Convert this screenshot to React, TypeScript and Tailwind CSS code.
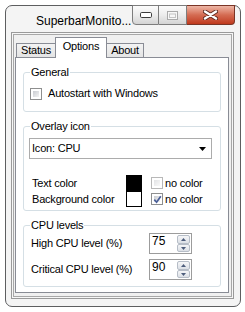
import React from "react";

function CheckBox({ checked = false, dim = false }: { checked?: boolean; dim?: boolean }) {
  return (
    <div
      className={
        dim
          ? "relative w-[12px] h-[12px] shrink-0 border border-[#b8b8b8] bg-white p-[2px]"
          : "relative w-[12px] h-[12px] shrink-0 border border-[#8e8f8f] bg-white p-[2px]"
      }
    >
      <div
        className={
          dim
            ? "w-full h-full bg-linear-to-br from-[#e2e3e5] to-[#f9f9f9]"
            : "w-full h-full bg-linear-to-br from-[#c9ccd1] to-[#f3f3f3]"
        }
      />
      {checked && (
        <svg className="absolute left-[1px] top-[1px]" width="9" height="9" viewBox="0 0 9 9">
          <path d="M1.3 4.6 L3.6 7.2 L7.8 1.2" fill="none" stroke="#4a5f98" strokeWidth="1.7" />
        </svg>
      )}
    </div>
  );
}

function SpinBox({ value }: { value: string }) {
  return (
    <div className="flex w-[43px] h-[21px] border border-[#9c9c9c] bg-white">
      <div className="flex-1 pl-[2px] text-[12px] leading-[14px] tracking-[0px]">{value}</div>
      <div className="flex flex-col w-[14px] py-px pr-px">
        <div className="h-[9px] border border-[#b6bdc7] rounded-[2px] bg-linear-to-b from-[#f5f6f8] to-[#dce0e6] flex items-center justify-center">
          <svg width="5" height="3" viewBox="0 0 5 3">
            <path d="M0 3 L2.5 0 L5 3 Z" fill="#4d5d7c" />
          </svg>
        </div>
        <div className="h-[8px] border border-[#b6bdc7] rounded-[2px] bg-linear-to-b from-[#f5f6f8] to-[#dce0e6] flex items-center justify-center">
          <svg width="5" height="3" viewBox="0 0 5 3">
            <path d="M0 0 L2.5 3 L5 0 Z" fill="#4d5d7c" />
          </svg>
        </div>
      </div>
    </div>
  );
}

export default function App() {
  return (
    <div className="w-[245px] h-[312px] bg-white pt-[5px] pl-[5px] font-['Liberation_Sans',Arial,sans-serif] text-black">
      <div className="w-[236px] h-[302px] border border-[#5d5e60] rounded-[7px] bg-[#f4f4f4] flex flex-col">
        {/* Title bar */}
        <div className="flex h-[26px] shrink-0">
          <div className="pl-[30px] pt-[8px] text-[12px] leading-[15px]">SuperbarMonito...</div>
          <div className="ml-auto mr-[5px] -mt-px flex h-[20px]">
            <div className="w-[27px] h-full border border-[#7d7d7d] rounded-bl-[4px] bg-linear-to-b from-[#fcfcfc] via-[#ececec] to-[#d4d4d4] flex items-center justify-center">
              <svg width="12" height="6" viewBox="0 0 12 6">
                <rect x="0.5" y="0.5" width="11" height="5" rx="1.2" fill="#ffffff" stroke="#3c3c3c" />
              </svg>
            </div>
            <div className="w-[28px] h-full border-y border-r border-[#7d7d7d] bg-linear-to-b from-[#fcfcfc] via-[#ececec] to-[#d4d4d4] flex items-center justify-center">
              <svg width="11" height="9" viewBox="0 0 11 9">
                <rect x="0.5" y="0.5" width="10" height="8" fill="#f7f7f7" stroke="#a9a9a9" />
                <rect x="2.5" y="3" width="6" height="3.5" fill="none" stroke="#c4c4c4" />
              </svg>
            </div>
            <div className="w-[48px] h-full border-y border-r border-[#7a3526] rounded-br-[4px] bg-linear-to-b from-[#edb6a6] via-[#d46b52] to-[#c0391c] flex items-center justify-center">
              <svg width="15" height="10" viewBox="0 0 15 10">
                <path d="M2 1.5 L13 8.5 M13 1.5 L2 8.5" stroke="#5e2a20" strokeWidth="4.2" strokeLinecap="round" />
                <path d="M2 1.5 L13 8.5 M13 1.5 L2 8.5" stroke="#ffffff" strokeWidth="2.4" strokeLinecap="round" />
              </svg>
            </div>
          </div>
        </div>

        {/* Client area */}
        <div className="ml-[5px] w-[223px] flex-1 mb-[7px] border border-[#9a9a9a] p-px bg-[#f7f7f7]">
          <div className="h-full border border-[#a8a8a8] bg-[#f0f0f0] pt-[2px]">
            <div className="ml-px w-[214px] flex flex-col">
              {/* Tabs */}
              <div className="flex items-end h-[20px] pl-px text-[11px] tracking-[-0.2px]">
                <div className="w-[40px] h-[14px] border-l border-t border-r border-[#898c95] bg-linear-to-b from-[#f3f3f3] to-[#e4e4e4] flex items-center justify-center leading-[13px]">
                  Status
                </div>
                <div className="relative z-10 -ml-px w-[52px] h-[21px] -mb-px border-l border-t border-r border-[#898c95] bg-white flex items-start justify-center pt-[2px] leading-[13px]">
                  Options
                </div>
                <div className="-ml-px w-[38px] h-[14px] border-l border-t border-r border-[#898c95] bg-linear-to-b from-[#f3f3f3] to-[#e4e4e4] flex items-center justify-center leading-[13px]">
                  About
                </div>
              </div>

              {/* Panel */}
              <div className="h-[236px] border border-[#898c95] bg-white pt-[8px] pl-[7px] text-[11px] leading-[13px] tracking-[-0.2px]">
                {/* General */}
                <fieldset className="w-[198px] border border-[#d5dfe5] rounded-[3px] pb-[11px]">
                  <legend className="ml-[6px] px-px leading-[13px]">General</legend>
                  <div className="mt-[8px] ml-[6px] h-[13px] flex items-center">
                    <CheckBox />
                    <span className="ml-[6px]">Autostart with Windows</span>
                  </div>
                </fieldset>

                {/* Overlay icon */}
                <fieldset className="mt-[8px] w-[198px] border border-[#d5dfe5] rounded-[3px] pb-[3px]">
                  <legend className="ml-[6px] px-px leading-[13px]">Overlay icon</legend>
                  <div className="mt-[5px] ml-[5px] w-[183px] h-[21px] border border-[#acacac] bg-white flex items-center pl-[2px] pr-[5px]">
                    <span className="flex-1">Icon: CPU</span>
                    <svg width="7" height="4" viewBox="0 0 7 4">
                      <path d="M0 0 L7 0 L3.5 4 Z" fill="#000000" />
                    </svg>
                  </div>
                  <div className="mt-[16px] ml-[8px] h-[16px] flex items-center">
                    <span className="w-[94px]">Text color</span>
                    <div className="w-[16px] h-[16px] bg-black" />
                    <div className="ml-[9px]">
                      <CheckBox dim />
                    </div>
                    <span className="ml-[2px]">no color</span>
                  </div>
                  <div className="ml-[8px] h-[16px] flex items-center">
                    <span className="w-[94px]">Background color</span>
                    <div className="w-[16px] h-[16px] bg-white border border-black" />
                    <div className="ml-[9px]">
                      <CheckBox checked />
                    </div>
                    <span className="ml-[2px]">no color</span>
                  </div>
                </fieldset>

                {/* CPU levels */}
                <fieldset className="mt-[8px] w-[198px] border border-[#d5dfe5] rounded-[3px] pb-[6px]">
                  <legend className="ml-[6px] px-px leading-[13px]">CPU levels</legend>
                  <div className="mt-px ml-[7px] flex items-center">
                    <span className="w-[118px]">High CPU level (%)</span>
                    <SpinBox value="75" />
                  </div>
                  <div className="mt-[5px] ml-[7px] flex items-center">
                    <span className="w-[118px]">Critical CPU level (%)</span>
                    <SpinBox value="90" />
                  </div>
                </fieldset>
              </div>
            </div>
          </div>
        </div>
      </div>
    </div>
  );
}
